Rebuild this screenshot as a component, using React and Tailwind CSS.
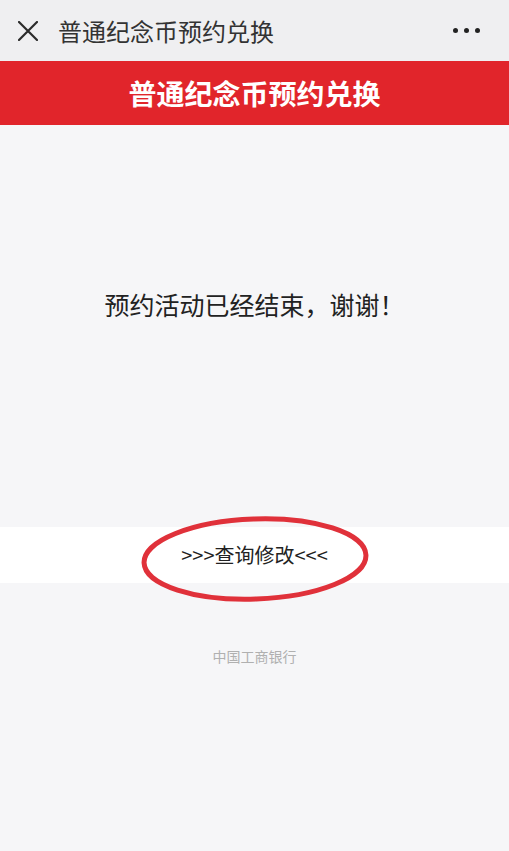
import React from "react";

export default function App() {
  const font = { fontFamily: '"Noto Sans CJK SC", "Noto Sans", sans-serif' };
  return (
    <div className="w-[509px] h-[851px] bg-[#f6f6f8] flex flex-col relative overflow-hidden" style={font}>
      {/* top nav bar */}
      <div className="h-[61px] bg-[#efeff1] flex items-center relative shrink-0">
        <svg width="20" height="20" viewBox="0 0 20 20" className="ml-[18px]">
          <path d="M1 1 L19 19 M19 1 L1 19" stroke="#2b2b2b" strokeWidth="2.2" strokeLinecap="round" fill="none" />
        </svg>
        <span className="ml-[20px] text-[24px] leading-none text-[#333]">普通纪念币预约兑换</span>
        <div className="ml-auto mr-[29px] flex gap-[6px]">
          <span className="w-[5px] h-[5px] rounded-full bg-[#222]" />
          <span className="w-[5px] h-[5px] rounded-full bg-[#222]" />
          <span className="w-[5px] h-[5px] rounded-full bg-[#222]" />
        </div>
      </div>
      {/* red header */}
      <div className="h-[64px] bg-[#e1252b] flex items-center justify-center shrink-0">
        <span className="text-[28px] font-bold text-white leading-none">普通纪念币预约兑换</span>
      </div>
      {/* body */}
      <div className="h-[402px] shrink-0 flex justify-center pt-[164px]">
        <span className="text-[25px] leading-[30px] text-[#222]">预约活动已经结束，谢谢！</span>
      </div>
      {/* white band */}
      <div className="h-[56px] bg-white flex items-center justify-center shrink-0">
        <span className="text-[20px] leading-none text-[#222]">&gt;&gt;&gt;查询修改&lt;&lt;&lt;</span>
      </div>
      {/* footer */}
      <div className="flex justify-center pt-[63px]">
        <span className="text-[14px] leading-[20px] text-[#b0b0b0]">中国工商银行</span>
      </div>
      {/* red hand-drawn ellipse annotation */}
      <svg className="absolute left-[138px] top-[513px]" width="234" height="92" viewBox="0 0 234 92">
        <ellipse cx="117" cy="46" rx="111" ry="40" fill="none" stroke="#e0313a" strokeWidth="5" transform="rotate(-2 117 46)" />
      </svg>
    </div>
  );
}
